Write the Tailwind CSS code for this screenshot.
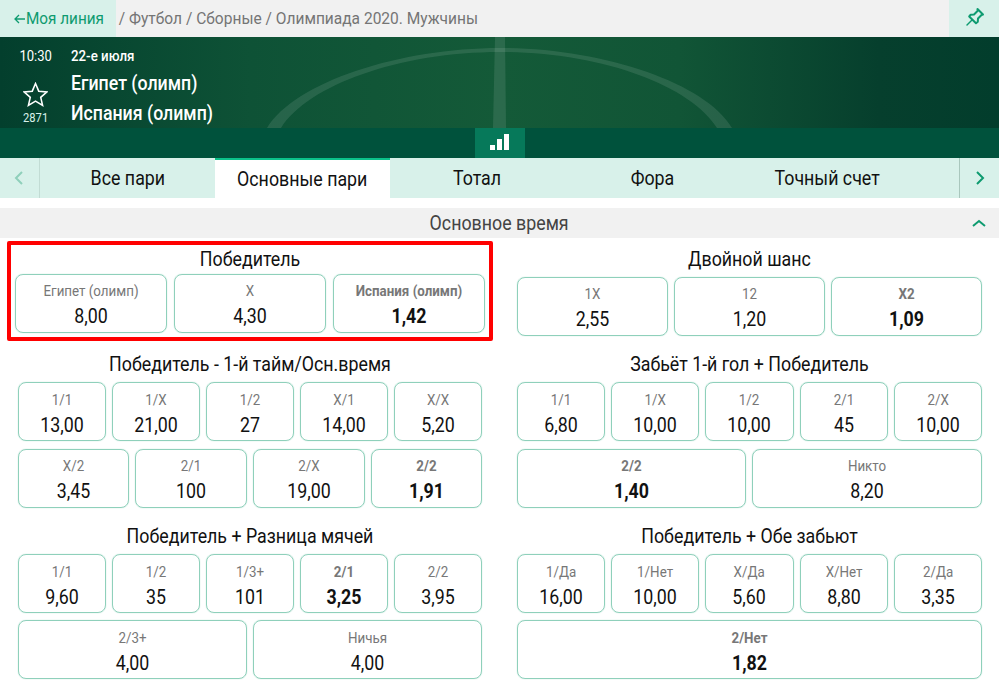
<!DOCTYPE html>
<html lang="ru">
  <head>
    <meta charset="UTF-8" />
    <title>Египет (олимп) - Испания (олимп)</title>
    <script src="https://cdn.jsdelivr.net/npm/@tailwindcss/browser@4"></script>
  </head>
  <body class="bg-white font-['Roboto',sans-serif] w-[999px] h-[684px] overflow-hidden">
    <!-- breadcrumbs -->
    <div class="flex h-[37px] bg-[#f1f1f1] items-center text-[17px] whitespace-nowrap">
      <a class="w-[116px] h-full bg-[#d8f1ea] flex items-center pl-[14px] text-[#0e9b70]">
        <svg width="11" height="10" viewBox="0 0 11 10" fill="none" stroke="#0e9b70" stroke-width="1.300"><path d="M11 5H1M5 1L1 5l4 4" /></svg>
        <span class="ml-[1px] origin-left scale-x-[.9]">Моя линия</span>
      </a>
      <div class="flex-1 pl-[3px] text-[#757575] origin-left scale-x-[.913]">/ Футбол / Сборные / Олимпиада 2020. Мужчины</div>
      <div class="w-[50px] h-full bg-[#d8f1ea] flex items-center justify-center">
        <svg class="mb-[3px] ml-[1px]" width="20" height="20" viewBox="0 0 20 20" fill="none" stroke="#0e9b70" stroke-width="2" stroke-linejoin="round" stroke-linecap="round">
          <path d="M12.500 2l5.500 5.500-1.500.5-3.500 3.500-.2 3.300-1.800 1.500-6.800-6.800 1.500-1.800 3.300-.2 3.500-3.500z" />
          <path d="M7 13L2 18" stroke-width="1.500" />
        </svg>
      </div>
    </div>

    <!-- match header -->
    <div class="relative h-[91px] overflow-hidden bg-[linear-gradient(90deg,#033f2d_0%,#0e5236_25%,#145a38_50%,#115536_68%,#063f2d_88%,#023d2c_100%)] text-white">
      <svg class="absolute inset-0" width="999" height="91" viewBox="0 0 999 91" fill="#ffffff" fill-opacity="0.1">
        <path d="M495 0H505L506 91H493z" />
        <path d="M267 91C295 45 400 11 500 11C600 11 705 45 732 91H717C690 48 600 15 500 15C400 15 308 48 281 91z" />
      </svg>
      <div class="relative flex h-full">
        <div class="w-[71px] flex flex-col items-center">
          <div class="text-[15px] leading-[20px] mt-[9px] scale-x-[.87]">10:30</div>
          <svg class="mt-[16px]" width="25" height="25" viewBox="0 0 24 24" fill="none" stroke="#ffffff" stroke-width="1.500">
            <path d="M12 1.500l3.100 7.300 7.900.7-6 5.200 1.800 7.700L12 18.300l-6.800 4.100L7 14.700l-6-5.200 7.900-.7z" />
          </svg>
          <div class="text-[13px] leading-[14px] mt-[4px] text-[#d8f1ea] scale-x-[.86]">2871</div>
        </div>
        <div class="origin-left scale-x-[.887]">
          <div class="text-[15px] leading-[20px] mt-[9px] font-medium">22-е июля</div>
          <div class="text-[20px] leading-[30px] font-medium mt-[2px]">Египет (олимп)</div>
          <div class="text-[20px] leading-[30px] font-medium">Испания (олимп)</div>
        </div>
      </div>
    </div>
    <div class="h-[30px] bg-[#00523c] flex justify-center">
      <div class="w-[50px] h-full bg-[#06795a] flex items-end justify-center gap-[2px] pb-[8px]">
        <span class="w-[5px] h-[5px] bg-white"></span>
        <span class="w-[5px] h-[11px] bg-white"></span>
        <span class="w-[5px] h-[16px] bg-white"></span>
      </div>
    </div>

    <!-- tabs -->
    <div class="flex h-[40px] bg-[#d8f1ea] text-[20px] text-[#111]">
      <div class="w-[40px] border-r border-[#c2dcd4] flex items-center justify-center pr-[1px]">
        <svg width="10" height="16" viewBox="0 0 10 16" fill="none" stroke="#8fd0bb" stroke-width="2"><path d="M8 2L2 8l6 6" /></svg>
      </div>
      <div class="w-[175px] flex items-center justify-center"><span class="scale-x-[.89]">Все пари</span></div>
      <div class="w-[175px] flex items-center justify-center bg-white border-t-2 border-[#0bc18a]"><span class="scale-x-[.89]">Основные пари</span></div>
      <div class="w-[175px] flex items-center justify-center"><span class="scale-x-[.89]">Тотал</span></div>
      <div class="w-[175px] flex items-center justify-center"><span class="scale-x-[.89]">Фора</span></div>
      <div class="w-[175px] flex items-center justify-center"><span class="scale-x-[.89]">Точный счет</span></div>
      <div class="w-[44px]"></div>
      <div class="w-[40px] border-l border-[#a9c7bd] flex items-center justify-center">
        <svg width="10" height="16" viewBox="0 0 10 16" fill="none" stroke="#0e9b70" stroke-width="2"><path d="M2 2l6 6-6 6" /></svg>
      </div>
    </div>

    <!-- section -->
    <div class="relative mt-[10px] h-[30px] bg-[#f1f1f1] flex items-center justify-center text-[20px] text-[#444]">
      <span class="scale-x-[.89]">Основное время</span>
      <svg class="absolute right-[13px] top-[11px]" width="14" height="9" viewBox="0 0 14 9" fill="none" stroke="#0e9b70" stroke-width="2"><path d="M1 7l6-5 6 5" /></svg>
    </div>

    <div class="grid grid-cols-[500px_499px] text-center">
      <!-- left column -->
      <div>
        <div class="mx-[7px] mt-[3px] h-[100px] border-4 border-[#ff0000] rounded-[2px] px-[4px]">
          <div class="h-[29px] leading-[29px] text-[20px] text-[#111] scale-x-[.89]">Победитель</div>
          <div class="flex gap-[7px]">
            <div class="flex-1 h-[59px] border border-[#8fd0bb] rounded-[8px] shadow-[0_0_1px_#8fd0bb]">
              <div class="text-[15px] leading-[16px] mt-[8px] text-[#777] scale-x-[.89]">Египет (олимп)</div>
              <div class="text-[20px] leading-[24px] mt-[5px] text-[#111] scale-x-[.89]">8,00</div>
            </div>
            <div class="flex-1 h-[59px] border border-[#8fd0bb] rounded-[8px] shadow-[0_0_1px_#8fd0bb]">
              <div class="text-[15px] leading-[16px] mt-[8px] text-[#777] scale-x-[.89]">X</div>
              <div class="text-[20px] leading-[24px] mt-[5px] text-[#111] scale-x-[.89]">4,30</div>
            </div>
            <div class="flex-1 h-[59px] border border-[#8fd0bb] rounded-[8px] shadow-[0_0_1px_#8fd0bb]">
              <div class="text-[15px] leading-[16px] mt-[8px] text-[#777] font-bold scale-x-[.89]">Испания (олимп)</div>
              <div class="text-[20px] leading-[24px] mt-[5px] text-[#111] font-bold scale-x-[.89]">1,42</div>
            </div>
          </div>
        </div>

        <div class="px-[18px]">
          <div class="mt-[5px] h-[36px] leading-[36px] text-[20px] text-[#111] scale-x-[.89]">Победитель - 1-й тайм/Осн.время</div>
          <div class="flex gap-[6px]">
            <div class="flex-1 h-[59px] border border-[#8fd0bb] rounded-[8px] shadow-[0_0_1px_#8fd0bb]"><div class="text-[15px] leading-[16px] mt-[9px] text-[#777] scale-x-[.89]">1/1</div><div class="text-[20px] leading-[24px] mt-[5px] text-[#111] scale-x-[.89]">13,00</div></div>
            <div class="flex-1 h-[59px] border border-[#8fd0bb] rounded-[8px] shadow-[0_0_1px_#8fd0bb]"><div class="text-[15px] leading-[16px] mt-[9px] text-[#777] scale-x-[.89]">1/X</div><div class="text-[20px] leading-[24px] mt-[5px] text-[#111] scale-x-[.89]">21,00</div></div>
            <div class="flex-1 h-[59px] border border-[#8fd0bb] rounded-[8px] shadow-[0_0_1px_#8fd0bb]"><div class="text-[15px] leading-[16px] mt-[9px] text-[#777] scale-x-[.89]">1/2</div><div class="text-[20px] leading-[24px] mt-[5px] text-[#111] scale-x-[.89]">27</div></div>
            <div class="flex-1 h-[59px] border border-[#8fd0bb] rounded-[8px] shadow-[0_0_1px_#8fd0bb]"><div class="text-[15px] leading-[16px] mt-[9px] text-[#777] scale-x-[.89]">X/1</div><div class="text-[20px] leading-[24px] mt-[5px] text-[#111] scale-x-[.89]">14,00</div></div>
            <div class="flex-1 h-[59px] border border-[#8fd0bb] rounded-[8px] shadow-[0_0_1px_#8fd0bb]"><div class="text-[15px] leading-[16px] mt-[9px] text-[#777] scale-x-[.89]">X/X</div><div class="text-[20px] leading-[24px] mt-[5px] text-[#111] scale-x-[.89]">5,20</div></div>
          </div>
          <div class="flex gap-[6px] mt-[8px]">
            <div class="w-[111px] h-[59px] border border-[#8fd0bb] rounded-[8px] shadow-[0_0_1px_#8fd0bb]"><div class="text-[15px] leading-[16px] mt-[8px] text-[#777] scale-x-[.89]">X/2</div><div class="text-[20px] leading-[24px] mt-[5px] text-[#111] scale-x-[.89]">3,45</div></div>
            <div class="w-[112px] h-[59px] border border-[#8fd0bb] rounded-[8px] shadow-[0_0_1px_#8fd0bb]"><div class="text-[15px] leading-[16px] mt-[8px] text-[#777] scale-x-[.89]">2/1</div><div class="text-[20px] leading-[24px] mt-[5px] text-[#111] scale-x-[.89]">100</div></div>
            <div class="w-[112px] h-[59px] border border-[#8fd0bb] rounded-[8px] shadow-[0_0_1px_#8fd0bb]"><div class="text-[15px] leading-[16px] mt-[8px] text-[#777] scale-x-[.89]">2/X</div><div class="text-[20px] leading-[24px] mt-[5px] text-[#111] scale-x-[.89]">19,00</div></div>
            <div class="flex-1 h-[59px] border border-[#8fd0bb] rounded-[8px] shadow-[0_0_1px_#8fd0bb]"><div class="text-[15px] leading-[16px] mt-[8px] text-[#777] font-bold scale-x-[.89]">2/2</div><div class="text-[20px] leading-[24px] mt-[5px] text-[#111] font-bold scale-x-[.89]">1,91</div></div>
          </div>

          <div class="mt-[10px] h-[36px] leading-[36px] text-[20px] text-[#111] scale-x-[.89]">Победитель + Разница мячей</div>
          <div class="flex gap-[6px]">
            <div class="flex-1 h-[59px] border border-[#8fd0bb] rounded-[8px] shadow-[0_0_1px_#8fd0bb]"><div class="text-[15px] leading-[16px] mt-[9px] text-[#777] scale-x-[.89]">1/1</div><div class="text-[20px] leading-[24px] mt-[5px] text-[#111] scale-x-[.89]">9,60</div></div>
            <div class="flex-1 h-[59px] border border-[#8fd0bb] rounded-[8px] shadow-[0_0_1px_#8fd0bb]"><div class="text-[15px] leading-[16px] mt-[9px] text-[#777] scale-x-[.89]">1/2</div><div class="text-[20px] leading-[24px] mt-[5px] text-[#111] scale-x-[.89]">35</div></div>
            <div class="flex-1 h-[59px] border border-[#8fd0bb] rounded-[8px] shadow-[0_0_1px_#8fd0bb]"><div class="text-[15px] leading-[16px] mt-[9px] text-[#777] scale-x-[.89]">1/3+</div><div class="text-[20px] leading-[24px] mt-[5px] text-[#111] scale-x-[.89]">101</div></div>
            <div class="flex-1 h-[59px] border border-[#8fd0bb] rounded-[8px] shadow-[0_0_1px_#8fd0bb]"><div class="text-[15px] leading-[16px] mt-[9px] text-[#777] font-bold scale-x-[.89]">2/1</div><div class="text-[20px] leading-[24px] mt-[5px] text-[#111] font-bold scale-x-[.89]">3,25</div></div>
            <div class="flex-1 h-[59px] border border-[#8fd0bb] rounded-[8px] shadow-[0_0_1px_#8fd0bb]"><div class="text-[15px] leading-[16px] mt-[9px] text-[#777] scale-x-[.89]">2/2</div><div class="text-[20px] leading-[24px] mt-[5px] text-[#111] scale-x-[.89]">3,95</div></div>
          </div>
          <div class="flex gap-[6px] mt-[7px]">
            <div class="flex-1 h-[59px] border border-[#8fd0bb] rounded-[8px] shadow-[0_0_1px_#8fd0bb]"><div class="text-[15px] leading-[16px] mt-[9px] text-[#777] scale-x-[.89]">2/3+</div><div class="text-[20px] leading-[24px] mt-[5px] text-[#111] scale-x-[.89]">4,00</div></div>
            <div class="flex-1 h-[59px] border border-[#8fd0bb] rounded-[8px] shadow-[0_0_1px_#8fd0bb]"><div class="text-[15px] leading-[16px] mt-[9px] text-[#777] scale-x-[.89]">Ничья</div><div class="text-[20px] leading-[24px] mt-[5px] text-[#111] scale-x-[.89]">4,00</div></div>
          </div>
        </div>
      </div>

      <!-- right column -->
      <div class="px-[17px]">
        <div class="mt-[3px] h-[36px] leading-[36px] text-[20px] text-[#111] scale-x-[.89]">Двойной шанс</div>
        <div class="flex gap-[6px]">
          <div class="flex-1 h-[59px] border border-[#8fd0bb] rounded-[8px] shadow-[0_0_1px_#8fd0bb]"><div class="text-[15px] leading-[16px] mt-[8px] text-[#777] scale-x-[.89]">1X</div><div class="text-[20px] leading-[24px] mt-[5px] text-[#111] scale-x-[.89]">2,55</div></div>
          <div class="flex-1 h-[59px] border border-[#8fd0bb] rounded-[8px] shadow-[0_0_1px_#8fd0bb]"><div class="text-[15px] leading-[16px] mt-[8px] text-[#777] scale-x-[.89]">12</div><div class="text-[20px] leading-[24px] mt-[5px] text-[#111] scale-x-[.89]">1,20</div></div>
          <div class="flex-1 h-[59px] border border-[#8fd0bb] rounded-[8px] shadow-[0_0_1px_#8fd0bb]"><div class="text-[15px] leading-[16px] mt-[8px] text-[#777] font-bold scale-x-[.89]">X2</div><div class="text-[20px] leading-[24px] mt-[5px] text-[#111] font-bold scale-x-[.89]">1,09</div></div>
        </div>

        <div class="mt-[10px] h-[36px] leading-[36px] text-[20px] text-[#111] scale-x-[.89]">Забьёт 1-й гол + Победитель</div>
        <div class="flex gap-[6px]">
          <div class="flex-1 h-[59px] border border-[#8fd0bb] rounded-[8px] shadow-[0_0_1px_#8fd0bb]"><div class="text-[15px] leading-[16px] mt-[9px] text-[#777] scale-x-[.89]">1/1</div><div class="text-[20px] leading-[24px] mt-[5px] text-[#111] scale-x-[.89]">6,80</div></div>
          <div class="flex-1 h-[59px] border border-[#8fd0bb] rounded-[8px] shadow-[0_0_1px_#8fd0bb]"><div class="text-[15px] leading-[16px] mt-[9px] text-[#777] scale-x-[.89]">1/X</div><div class="text-[20px] leading-[24px] mt-[5px] text-[#111] scale-x-[.89]">10,00</div></div>
          <div class="flex-1 h-[59px] border border-[#8fd0bb] rounded-[8px] shadow-[0_0_1px_#8fd0bb]"><div class="text-[15px] leading-[16px] mt-[9px] text-[#777] scale-x-[.89]">1/2</div><div class="text-[20px] leading-[24px] mt-[5px] text-[#111] scale-x-[.89]">10,00</div></div>
          <div class="flex-1 h-[59px] border border-[#8fd0bb] rounded-[8px] shadow-[0_0_1px_#8fd0bb]"><div class="text-[15px] leading-[16px] mt-[9px] text-[#777] scale-x-[.89]">2/1</div><div class="text-[20px] leading-[24px] mt-[5px] text-[#111] scale-x-[.89]">45</div></div>
          <div class="flex-1 h-[59px] border border-[#8fd0bb] rounded-[8px] shadow-[0_0_1px_#8fd0bb]"><div class="text-[15px] leading-[16px] mt-[9px] text-[#777] scale-x-[.89]">2/X</div><div class="text-[20px] leading-[24px] mt-[5px] text-[#111] scale-x-[.89]">10,00</div></div>
        </div>
        <div class="flex gap-[6px] mt-[8px]">
          <div class="w-[229px] h-[59px] border border-[#8fd0bb] rounded-[8px] shadow-[0_0_1px_#8fd0bb]"><div class="text-[15px] leading-[16px] mt-[8px] text-[#777] font-bold scale-x-[.89]">2/2</div><div class="text-[20px] leading-[24px] mt-[5px] text-[#111] font-bold scale-x-[.89]">1,40</div></div>
          <div class="flex-1 h-[59px] border border-[#8fd0bb] rounded-[8px] shadow-[0_0_1px_#8fd0bb]"><div class="text-[15px] leading-[16px] mt-[8px] text-[#777] scale-x-[.89]">Никто</div><div class="text-[20px] leading-[24px] mt-[5px] text-[#111] scale-x-[.89]">8,20</div></div>
        </div>

        <div class="mt-[10px] h-[36px] leading-[36px] text-[20px] text-[#111] scale-x-[.89]">Победитель + Обе забьют</div>
        <div class="flex gap-[6px]">
          <div class="flex-1 h-[59px] border border-[#8fd0bb] rounded-[8px] shadow-[0_0_1px_#8fd0bb]"><div class="text-[15px] leading-[16px] mt-[9px] text-[#777] scale-x-[.89]">1/Да</div><div class="text-[20px] leading-[24px] mt-[5px] text-[#111] scale-x-[.89]">16,00</div></div>
          <div class="flex-1 h-[59px] border border-[#8fd0bb] rounded-[8px] shadow-[0_0_1px_#8fd0bb]"><div class="text-[15px] leading-[16px] mt-[9px] text-[#777] scale-x-[.89]">1/Нет</div><div class="text-[20px] leading-[24px] mt-[5px] text-[#111] scale-x-[.89]">10,00</div></div>
          <div class="flex-1 h-[59px] border border-[#8fd0bb] rounded-[8px] shadow-[0_0_1px_#8fd0bb]"><div class="text-[15px] leading-[16px] mt-[9px] text-[#777] scale-x-[.89]">X/Да</div><div class="text-[20px] leading-[24px] mt-[5px] text-[#111] scale-x-[.89]">5,60</div></div>
          <div class="flex-1 h-[59px] border border-[#8fd0bb] rounded-[8px] shadow-[0_0_1px_#8fd0bb]"><div class="text-[15px] leading-[16px] mt-[9px] text-[#777] scale-x-[.89]">X/Нет</div><div class="text-[20px] leading-[24px] mt-[5px] text-[#111] scale-x-[.89]">8,80</div></div>
          <div class="flex-1 h-[59px] border border-[#8fd0bb] rounded-[8px] shadow-[0_0_1px_#8fd0bb]"><div class="text-[15px] leading-[16px] mt-[9px] text-[#777] scale-x-[.89]">2/Да</div><div class="text-[20px] leading-[24px] mt-[5px] text-[#111] scale-x-[.89]">3,35</div></div>
        </div>
        <div class="flex gap-[6px] mt-[7px]">
          <div class="flex-1 h-[59px] border border-[#8fd0bb] rounded-[8px] shadow-[0_0_1px_#8fd0bb]"><div class="text-[15px] leading-[16px] mt-[9px] text-[#777] font-bold scale-x-[.89]">2/Нет</div><div class="text-[20px] leading-[24px] mt-[5px] text-[#111] font-bold scale-x-[.89]">1,82</div></div>
        </div>
      </div>
    </div>
  </body>
</html>
